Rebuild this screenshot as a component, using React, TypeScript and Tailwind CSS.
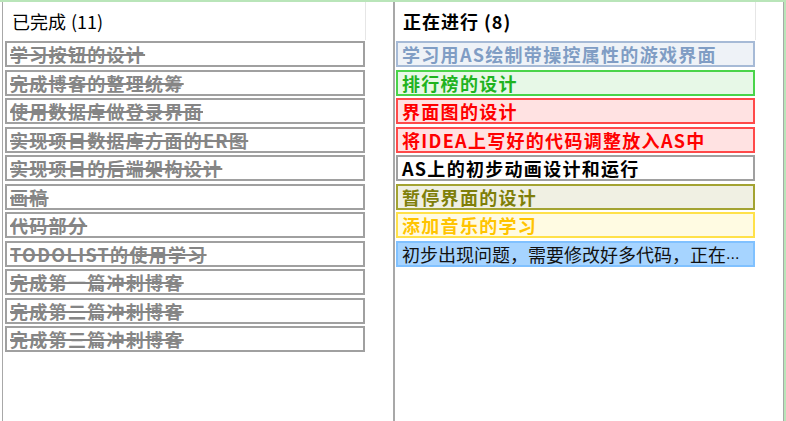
import React from "react";

const done = [
  "学习按钮的设计",
  "完成博客的整理统筹",
  "使用数据库做登录界面",
  "实现项目数据库方面的ER图",
  "实现项目的后端架构设计",
  "画稿",
  "代码部分",
  "TODOLIST的使用学习",
  "完成第一篇冲刺博客",
  "完成第二篇冲刺博客",
  "完成第三篇冲刺博客",
];

type Item = { text: string; cls: string };

const doing: Item[] = [
  { text: "学习用AS绘制带操控属性的游戏界面", cls: "border-[#a6bad6] bg-[#eef2f7] text-[#809dc4]" },
  { text: "排行榜的设计", cls: "border-[#4ad44a] bg-[#e7f8e7] text-[#1fb31f]" },
  { text: "界面图的设计", cls: "border-[#ff4a4a] bg-[#ffe2e2] text-[#ff0000]" },
  { text: "将IDEA上写好的代码调整放入AS中", cls: "border-[#ff4a4a] bg-[#ffe2e2] text-[#ff0000]" },
  { text: "AS上的初步动画设计和运行", cls: "border-[#a0a0a0] bg-white text-black" },
  { text: "暂停界面的设计", cls: "border-[#a3a332] bg-[#f0f0e3] text-[#7f7f0a]" },
  { text: "添加音乐的学习", cls: "border-[#ffe14a] bg-[#fffbe2] text-[#ffc400]" },
];

const font = { fontFamily: '"Noto Sans CJK SC", "Liberation Sans", sans-serif' };

export default function App() {
  return (
    <div
      className="w-[786px] h-[421px] bg-white border-t-2 border-r-2 border-[#b9e5b9] flex pl-[2px] overflow-hidden"
      style={font}
    >
      <div className="w-[392px] h-full border-l border-r border-[#a8a8a8] flex flex-col">
        <div className="w-[363px] h-[38px] shrink-0 border-r border-[#e6e6e6] flex items-center pl-[9px] text-[18px] text-black leading-none">
          已完成 <span className="ml-[5px]">(11)</span>
        </div>
        <div className="flex flex-col gap-[2.5px] pl-[2px] mt-[1px]">
          {done.map((t) => (
            <div
              key={t}
              className="w-[360px] h-[26px] border-2 border-[#a0a0a0] bg-white flex items-center pl-[3px] text-[18px] font-bold tracking-[1.3px] text-[#858585] leading-none whitespace-nowrap overflow-hidden"
            >
              <span className="line-through decoration-2 decoration-[#858585]">{t}</span>
            </div>
          ))}
        </div>
      </div>
      <div className="w-[390px] h-full border-l border-r border-[#a8a8a8] flex flex-col">
        <div className="w-[361px] h-[38px] shrink-0 border-r border-[#e6e6e6] flex items-center pl-[8px] text-[18px] font-bold tracking-[1px] text-black leading-none">
          正在进行 <span className="ml-[5px]">(8)</span>
        </div>
        <div className="flex flex-col gap-[2.5px] pl-[1px] mt-[1px]">
          {doing.map((it) => (
            <div
              key={it.text}
              className={`w-[359px] h-[26px] border-2 flex items-center pl-[4px] text-[18px] font-bold tracking-[1.3px] leading-none whitespace-nowrap overflow-hidden ${it.cls}`}
            >
              {it.text}
            </div>
          ))}
          <div className="w-[359px] h-[26px] border-2 border-[#80c1ff] bg-[#a6d4ff] flex items-center pl-[4px] text-[18px] text-[#111111] leading-none whitespace-nowrap overflow-hidden">
            初步出现问题，需要修改好多代码，正在
            <span style={{ fontFamily: '"Liberation Sans", sans-serif' }} className="text-[16px]">...</span>
          </div>
        </div>
      </div>
    </div>
  );
}
